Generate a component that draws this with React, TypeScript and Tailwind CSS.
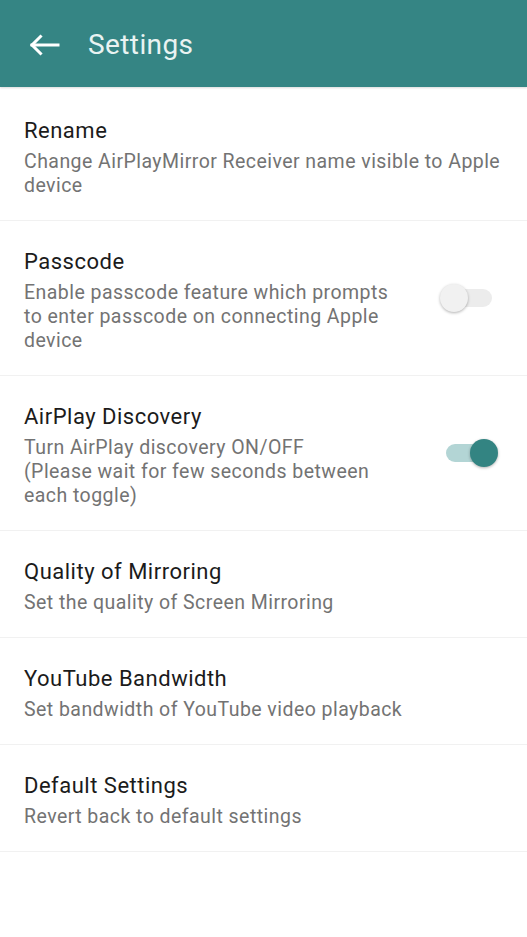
import { useState } from 'react';

type Item = {
  title: string;
  desc: string[];
  toggle?: boolean;
};

const items: Item[] = [
  { title: 'Rename', desc: ['Change AirPlayMirror Receiver name visible to Apple device'] },
  {
    title: 'Passcode',
    desc: ['Enable passcode feature which prompts to enter passcode on connecting Apple device'],
    toggle: false,
  },
  {
    title: 'AirPlay Discovery',
    desc: ['Turn AirPlay discovery ON/OFF', '(Please wait for few seconds between each toggle)'],
    toggle: true,
  },
  { title: 'Quality of Mirroring', desc: ['Set the quality of Screen Mirroring'] },
  { title: 'YouTube Bandwidth', desc: ['Set bandwidth of YouTube video playback'] },
  { title: 'Default Settings', desc: ['Revert back to default settings'] },
];

function Switch({ on, onChange }: { on: boolean; onChange: () => void }) {
  return (
    <button onClick={onChange} className="relative w-[58px] h-[30px] flex items-center shrink-0">
      {/* track */}
      <div
        className={`absolute left-[6px] w-[46px] h-[18px] rounded-full ${
          on ? 'bg-[#b3d5d5]' : 'bg-[#ececec]'
        }`}
      />
      {/* thumb */}
      <div
        className={`absolute top-[1px] w-[28px] h-[28px] rounded-full shadow-[0_1px_3px_rgba(0,0,0,0.3)] ${
          on ? 'left-[30px] bg-[#338482]' : 'left-0 bg-[#f1f1f1]'
        }`}
      />
    </button>
  );
}

export default function App() {
  const [toggles, setToggles] = useState<Record<number, boolean>>({ 1: false, 2: true });

  return (
    <div className="w-[527px] h-[937px] bg-white" style={{ fontFamily: 'Roboto, "Noto Sans", sans-serif' }}>
      {/* App bar */}
      <div className="h-[87px] bg-[#358584] flex items-center pt-[3px] shadow-[0_1px_2px_rgba(0,0,0,0.15)]">
        <div className="w-[88px] flex items-center pl-[29px]">
          <svg width="31" height="22" viewBox="0 0 31 22" fill="none" stroke="white" strokeWidth="3" strokeLinecap="square">
            <path d="M3 11H29" />
            <path d="M11.5 2.5L3 11L11.5 19.5" />
          </svg>
        </div>
        <span className="text-[28px] tracking-[0.4px] text-[#e9f3f2] leading-none">Settings</span>
      </div>

      {/* Preference list */}
      <div className="flex flex-col pt-[3px]">
        {items.map((item, i) => (
          <div
            key={item.title}
            className={`flex items-center border-b border-[#f1f1f1] pl-6 ${
              item.toggle !== undefined ? 'pr-[29px]' : 'pr-4'
            }`}
          >
            <div className={`pt-[27px] pb-[22px] ${item.toggle !== undefined ? 'w-[378px]' : 'flex-1'}`}>
              <div className="text-[22px] tracking-[0.5px] leading-[28px] text-[#1b1b1b]">{item.title}</div>
              <div className="text-[19.5px] tracking-[0.45px] leading-[24px] text-[#737373] mt-[5px]">
                {item.desc.map((line) => (
                  <div key={line}>{line}</div>
                ))}
              </div>
            </div>
            {item.toggle !== undefined && (
              <div className="flex-1 flex justify-end">
                <Switch
                  on={!!toggles[i]}
                  onChange={() => setToggles((t) => ({ ...t, [i]: !t[i] }))}
                />
              </div>
            )}
          </div>
        ))}
      </div>
    </div>
  );
}
